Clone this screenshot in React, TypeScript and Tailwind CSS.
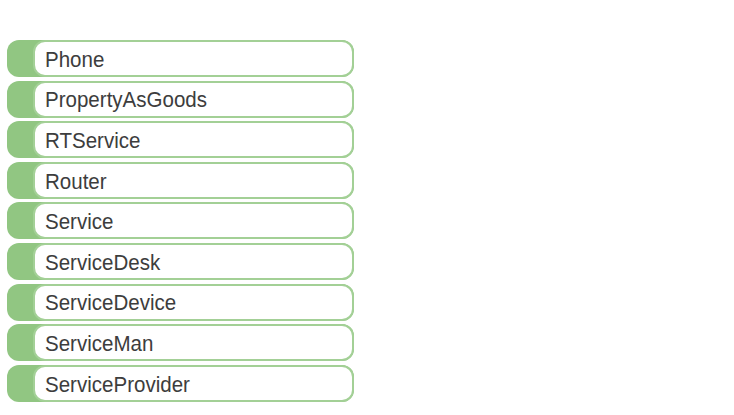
const items = [
  "Phone",
  "PropertyAsGoods",
  "RTService",
  "Router",
  "Service",
  "ServiceDesk",
  "ServiceDevice",
  "ServiceMan",
  "ServiceProvider",
];

export default function App() {
  return (
    <div className="min-h-screen bg-white pt-[40px] pl-[7px] font-['Liberation_Sans',Arial,sans-serif]">
      <ul className="flex w-[347px] flex-col gap-[3.6px]">
        {items.map((name) => (
          <li key={name} className="flex h-[37px] rounded-[12px] bg-[#91c682] pl-[26px]">
            <div className="flex flex-1 items-center rounded-[12px] border-2 border-[#a3d096] bg-white pl-[10px]">
              <span className="origin-left scale-x-[0.955] pt-[4px] text-[21.5px] leading-none text-[#3d3d3d]">
                {name}
              </span>
            </div>
          </li>
        ))}
      </ul>
    </div>
  );
}
